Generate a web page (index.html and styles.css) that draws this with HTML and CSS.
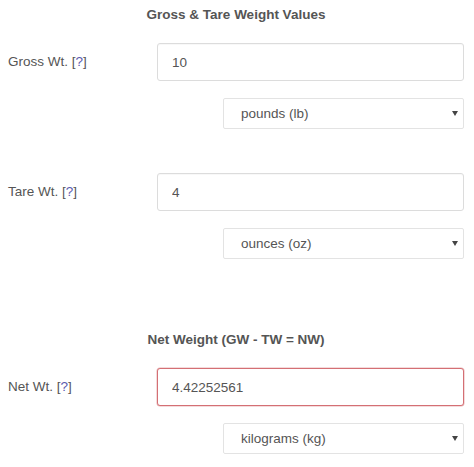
FILE: index.html
```html
<!DOCTYPE html>
<html>
<head>
<meta charset="utf-8">
<link rel="stylesheet" href="styles.css">
</head>
<body>
<div class="form">
  <div class="title">Gross &amp; Tare Weight Values</div>

  <div class="row first">
    <label class="label">Gross Wt. [<a class="help" href="#">?</a>]</label>
    <input class="field" type="text" value="10">
  </div>
  <div class="unit-row">
    <div class="select-wrap">
      <select class="unit"><option>pounds (lb)</option></select>
    </div>
  </div>

  <div class="row">
    <label class="label">Tare Wt. [<a class="help" href="#">?</a>]</label>
    <input class="field" type="text" value="4">
  </div>
  <div class="unit-row">
    <div class="select-wrap">
      <select class="unit"><option>ounces (oz)</option></select>
    </div>
  </div>

  <div class="title second">Net Weight (GW - TW = NW)</div>

  <div class="row first">
    <label class="label">Net Wt. [<a class="help" href="#">?</a>]</label>
    <input class="field result" type="text" value="4.42252561">
  </div>
  <div class="unit-row">
    <div class="select-wrap">
      <select class="unit"><option>kilograms (kg)</option></select>
    </div>
  </div>
</div>
</body>
</html>
```

FILE: styles.css
```css
html, body {
  margin: 0;
  padding: 0;
  background: #ffffff;
}

.form {
  padding: 0 10px 0 8px;
  font-family: "Liberation Sans", Arial, sans-serif;
  font-size: 13.5px;
  color: #555555;
}

.title {
  margin-top: 7px;
  line-height: 15px;
  text-align: center;
  font-weight: bold;
  color: #555555;
}

.title.second {
  margin-top: 73px;
}

.row {
  display: flex;
  align-items: center;
  margin-top: 44px;
}

.row.first {
  margin-top: 21px;
}

.label {
  width: 149px;
  flex: none;
  line-height: 16px;
}

.help {
  color: #5b5bb0;
  text-decoration: none;
}

.field {
  box-sizing: border-box;
  width: 307px;
  height: 38px;
  margin: 0;
  padding: 0 14px;
  border: 1px solid #dcdcdc;
  border-radius: 3px;
  font-family: inherit;
  font-size: 13.5px;
  color: #555555;
  background: #ffffff;
  box-shadow: inset 0 1px 1px rgba(0, 0, 0, 0.03);
  outline: none;
}

.field.result {
  border-color: #d46f74;
  box-shadow: 0 0 0 0.5px rgba(212, 111, 116, 0.5);
}

.unit-row {
  display: flex;
  justify-content: flex-end;
  margin-top: 17px;
}

.select-wrap {
  position: relative;
  width: 241px;
  height: 31px;
}

.select-wrap::after {
  content: "";
  position: absolute;
  right: 6px;
  top: 13px;
  border-left: 3px solid transparent;
  border-right: 3px solid transparent;
  border-top: 5px solid #444444;
  pointer-events: none;
}

.unit {
  box-sizing: border-box;
  width: 100%;
  height: 100%;
  margin: 0;
  padding: 0 20px 0 17px;
  border: 1px solid #e3e3e3;
  border-radius: 2px;
  font-family: inherit;
  font-size: 13.5px;
  color: #555555;
  background: #ffffff;
  -webkit-appearance: none;
  appearance: none;
  outline: none;
}
```
